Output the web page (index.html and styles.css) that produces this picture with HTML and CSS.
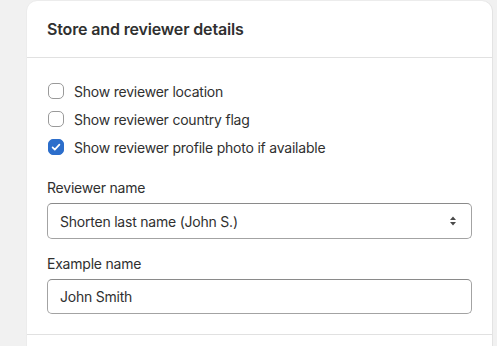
FILE: index.html
```html
<!DOCTYPE html>
<html>
<head>
<meta charset="utf-8">
<link rel="stylesheet" href="styles.css">
</head>
<body>
<section class="card">
  <header class="card-header">
    <h2 class="title">Store and reviewer details</h2>
  </header>
  <div class="card-body">
    <div class="checks">
      <label class="check"><span class="box"></span><span>Show reviewer location</span></label>
      <label class="check"><span class="box"></span><span>Show reviewer country flag</span></label>
      <label class="check"><span class="box checked"><svg viewBox="0 0 16 16" width="16" height="16"><path d="M4.6 8.4l2.2 2.2 4.6-4.9" fill="none" stroke="#fff" stroke-width="1.7" stroke-linecap="round" stroke-linejoin="round"/></svg></span><span>Show reviewer profile photo if available</span></label>
    </div>
    <div class="field">
      <div class="label">Reviewer name</div>
      <div class="control select">
        <span>Shorten last name (John S.)</span>
        <svg class="arrows" viewBox="0 0 8 10" width="8" height="10"><path d="M4 0.5L7 4H1z M4 9.5L1 6h6z" fill="#4a4a4a"/></svg>
      </div>
    </div>
    <div class="field">
      <div class="label">Example name</div>
      <div class="control input"><span>John Smith</span></div>
    </div>
  </div>
  <div class="card-footer"></div>
</section>
</body>
</html>
```
FILE: styles.css
```css
html, body {
  margin: 0;
  padding: 0;
  background: #f1f1f1;
  font-family: Inter, "Noto Sans", sans-serif;
  color: #303030;
  font-size: 14px;
  letter-spacing: -0.22px;
}
.card {
  margin: 1px 0 0 27px;
  width: 465px;
  background: #fff;
  border-radius: 10px 10px 0 0;
  box-shadow: 1px 0 0 #e3e3e3, -1px 0 0 #ececec, 0 -1px 0 #ececec;
}
.card-header {
  height: 56px;
  display: flex;
  align-items: center;
  padding: 0 20px;
  border-bottom: 1px solid #e1e1e1;
}
.title {
  margin: 0;
  font-size: 16px;
  font-weight: 600;
  letter-spacing: -0.15px;
}
.card-body {
  padding: 19px 20px 20px 20px;
}
.checks {
  display: flex;
  flex-direction: column;
  margin-left: 1px;
}
.check {
  display: flex;
  align-items: center;
  gap: 10px;
  height: 28px;
}
.box {
  width: 14px;
  height: 14px;
  border: 1.5px solid #9a9a9a;
  border-radius: 5px;
  display: flex;
  align-items: center;
  justify-content: center;
  flex: none;
}
.box.checked {
  background: #2c6ecb;
  border-color: #2c6ecb;
}
.box.checked svg {
  flex: none;
}
.field {
  margin-top: 18px;
}
.field + .field {
  margin-top: 16px;
}
.label {
  height: 18px;
  line-height: 18px;
  margin-bottom: 6px;
}
.control {
  box-sizing: border-box;
  height: 36px;
  border: 1px solid #a3a3a3;
  border-top-color: #8a8a8a;
  border-radius: 5px;
  display: flex;
  align-items: center;
  padding: 0 12px;
  width: 425px;
}
.select {
  justify-content: space-between;
  padding-right: 14px;
}
.input {
  height: 35px;
}
.card-footer {
  border-top: 1px solid #e1e1e1;
  height: 12px;
}
```
